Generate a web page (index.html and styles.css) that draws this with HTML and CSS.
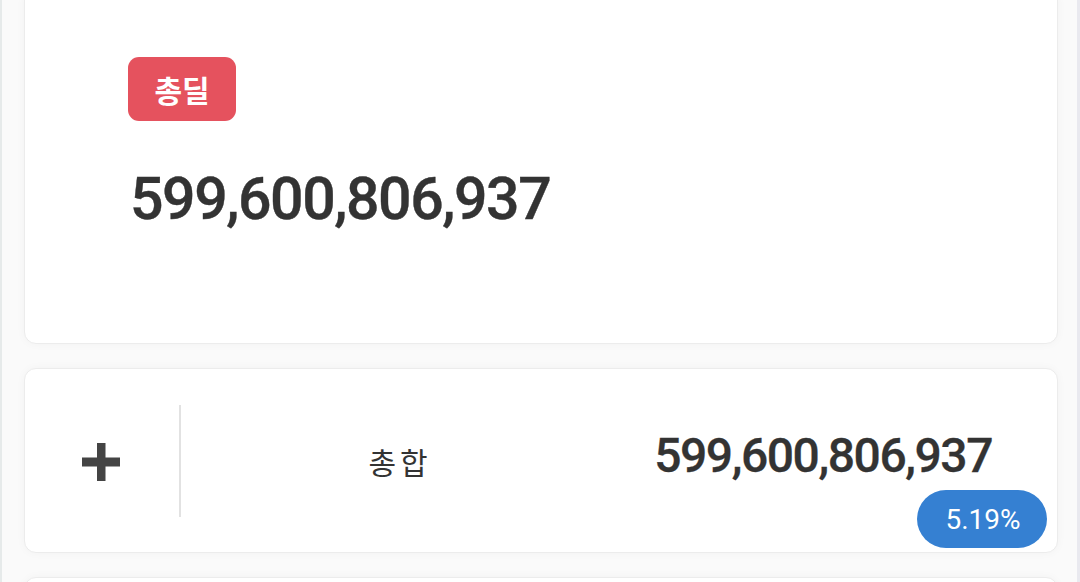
FILE: index.html
```html
<!DOCTYPE html>
<html lang="ko">
<head>
<meta charset="utf-8">
<link rel="stylesheet" href="styles.css">
</head>
<body>
<div class="page">
  <div class="list">
    <section class="card card-total">
      <span class="badge">총딜</span>
      <div class="big-num">599,600,806,937</div>
    </section>
    <section class="card card-row">
      <div class="plus-col">
        <svg class="plus" width="38" height="38" viewBox="0 0 38 38"><rect x="0" y="14.5" width="38" height="9" fill="#444"/><rect x="15" y="0" width="8.5" height="38" fill="#444"/></svg>
      </div>
      <div class="divider"></div>
      <div class="label-col">총합</div>
      <div class="num-col">599,600,806,937</div>
      <span class="pill">5.19%</span>
    </section>
    <section class="card card-next"></section>
  </div>
</div>
</body>
</html>
```

FILE: styles.css
```css
* { box-sizing: border-box; }
html, body { margin: 0; padding: 0; }
body {
  background: #fafafa;
  font-family: Roboto, "Noto Sans CJK KR", "Noto Sans", sans-serif;
  color: #333;
  overflow: hidden;
  height: 582px;
}
.page {
  height: 582px;
  overflow: hidden;
  border-left: 2px solid #e6eaea;
  border-right: 3px solid #e9e9ef;
  padding: 0 19px 0 22px;
}
.list {
  display: flex;
  flex-direction: column;
  gap: 24px;
  margin-top: -12px;
}
.card {
  background: #fff;
  border: 1px solid #ececec;
  border-radius: 12px;
  box-shadow: 0 0 10px rgba(0,0,0,0.035);
}
.card-total {
  height: 356px;
  padding: 68px 0 0 103px;
}
.badge {
  display: inline-flex;
  align-items: center;
  justify-content: center;
  width: 108px;
  height: 64px;
  border-radius: 11px;
  background: #e5525e;
  color: #fff;
  font-family: "Noto Sans CJK KR", sans-serif;
  font-weight: 700;
  font-size: 30px;
}
.big-num {
  margin-top: 48px;
  margin-left: 2px;
  font-size: 59px;
  line-height: 1;
  font-weight: 500;
  letter-spacing: -1.45px;
  color: #333;
  -webkit-text-stroke: 0.4px #333;
}
.card-row {
  position: relative;
  height: 185px;
  display: flex;
  align-items: center;
}
.plus-col {
  width: 154px;
  display: flex;
  justify-content: center;
  padding-top: 2px;
  padding-right: 2px;
}
.divider {
  width: 2px;
  height: 112px;
  background: #e2e2e2;
}
.label-col {
  width: 438px;
  text-align: center;
  font-family: "Noto Sans CJK KR", sans-serif;
  font-size: 30px;
  letter-spacing: 4px;
  color: #333;
}
.num-col {
  flex: 1;
  text-align: right;
  padding-right: 65px;
  font-size: 48px;
  font-weight: 500;
  letter-spacing: -1.45px;
  color: #333;
  line-height: 1;
  margin-top: -10px;
  -webkit-text-stroke: 0.3px #333;
}
.pill {
  position: absolute;
  right: 10px;
  bottom: 4px;
  width: 130px;
  height: 58px;
  border-radius: 29px;
  background: #3580d2;
  color: #fff;
  font-size: 28px;
  display: flex;
  align-items: center;
  justify-content: center;
  padding-left: 2px;
}
.card-next {
  height: 60px;
}
```
